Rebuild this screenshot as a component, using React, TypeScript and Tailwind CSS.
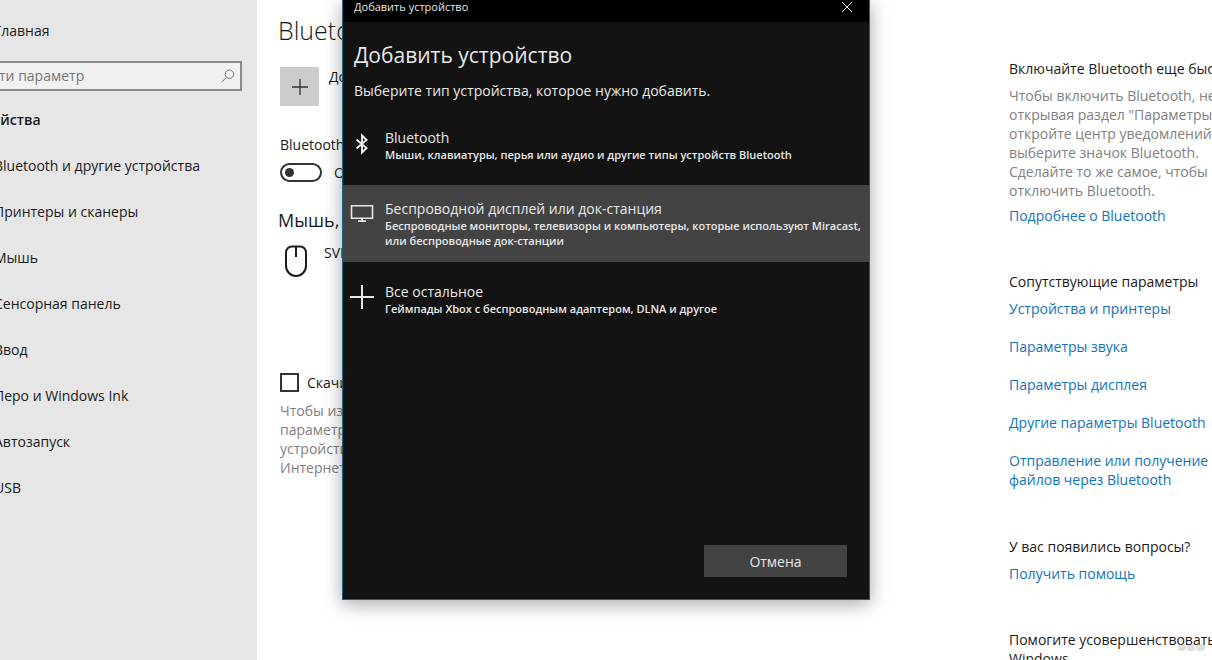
import { useState } from 'react';
import type { ReactNode } from 'react';

const NAV_ITEMS = [
  'Bluetooth и другие устройства',
  'Принтеры и сканеры',
  'Мышь',
  'Сенсорная панель',
  'Ввод',
  'Перо и Windows Ink',
  'Автозапуск',
  'USB',
];

const RELATED_LINKS = ['Устройства и принтеры', 'Параметры звука', 'Параметры дисплея', 'Другие параметры Bluetooth'];

const BluetoothIcon = () => (
  <svg width="14" height="24" viewBox="0 0 14 24" fill="none" stroke="currentColor" strokeWidth="2">
    <path d="M1.500 8.500l10 8.500-4.500 4.500V4.500l4.500 4.500-10 8.500" />
  </svg>
);

const MonitorIcon = () => (
  <svg width="24" height="20" viewBox="0 0 24 20" fill="none" stroke="currentColor">
    <path d="M1.500 1.800h21v12.500h-21z" strokeWidth="1.600" />
    <path d="M12 14.500v2.500M8 17.200h8" strokeWidth="1.800" />
  </svg>
);

const PlusIcon = ({ size }: { size: number }) => (
  <svg width={size} height={size} viewBox="0 0 24 24" fill="none" stroke="currentColor" strokeWidth="2">
    <path d="M12 0v24M0 12h24" />
  </svg>
);

const MouseIcon = () => (
  <svg width="24" height="33" viewBox="0 0 24 33" fill="none" stroke="currentColor" strokeWidth="2">
    <path d="M8 1.5h8a6 6 0 0 1 6 6V21a10 10 0 0 1-20 0V7.500a6 6 0 0 1 6-6zM12 1.500v10.500" />
  </svg>
);

const SearchIcon = () => (
  <svg width="14" height="14" viewBox="0 0 14 14" fill="none" stroke="currentColor">
    <circle cx="8.500" cy="5.200" r="4.200" />
    <path d="M5.500 8.300L.8 13" />
  </svg>
);

const DEVICE_TYPES: { title: string; text: string; icon: ReactNode; style: string }[] = [
  {
    title: 'Bluetooth',
    text: 'Мыши, клавиатуры, перья или аудио и другие типы устройств Bluetooth',
    icon: <BluetoothIcon />,
    style: 'h-[71px] pt-[14px]',
  },
  {
    title: 'Беспроводной дисплей или док-станция',
    text: 'Беспроводные мониторы, телевизоры и компьютеры, которые используют Miracast, или беспроводные док-станции',
    icon: <MonitorIcon />,
    style: 'h-[77px] pt-[14px] bg-[#434343]',
  },
  {
    title: 'Все остальное',
    text: 'Геймпады Xbox с беспроводным адаптером, DLNA и другое',
    icon: <PlusIcon size={24} />,
    style: 'h-[77px] pt-5',
  },
];

const Sidebar = () => (
  <aside className="-ml-[42px] w-[299px] shrink-0 bg-[#e6e6e6] pt-[21px]">
    <a href="#home" className="block pl-9">
      Главная
    </a>
    <div className="relative mt-[21px] mr-[15px] ml-1">
      <input
        type="text"
        aria-label="Найти параметр"
        placeholder="Найти параметр"
        className="block h-[30px] w-full border-2 border-[#8a8a8a] bg-[#f1f1f1] px-2 pb-0.5 placeholder-[#767676] outline-none"
      />
      <span className="absolute top-2 right-[7px] text-[#777]">
        <SearchIcon />
      </span>
    </div>
    <h2 className="mt-[19px] pl-0.5 font-semibold">Устройства</h2>
    <nav className="mt-[13px]">
      {NAV_ITEMS.map((item) => (
        <a key={item} href="#section" className="flex h-[46px] items-center pl-9">
          {item}
        </a>
      ))}
    </nav>
  </aside>
);

const DevicesSettings = () => {
  const [isOn, setIsOn] = useState(false);

  return (
    <main className="min-w-0 flex-1 overflow-hidden pt-3 pl-[23px] whitespace-nowrap">
      <h1 className="-ml-0.5 text-[25px] leading-9 font-light">Bluetooth и другие устройства</h1>
      <button type="button" className="mt-[19px] flex items-start gap-2.5">
        <span className="flex size-[39px] items-center justify-center bg-[#cccccc] text-[#333]">
          <PlusIcon size={16} />
        </span>
        <span>Добавление Bluetooth или другого устройства</span>
      </button>
      <p className="mt-[29px]">Bluetooth</p>
      <div className="mt-[9px] flex items-center gap-3">
        <button
          type="button"
          role="switch"
          aria-checked={isOn}
          aria-label="Bluetooth"
          onClick={() => setIsOn(!isOn)}
          className={`flex h-[19px] w-[42px] items-center rounded-full border-2 border-[#333] px-[3px] ${isOn ? 'justify-end' : ''}`}
        >
          <span className="size-[9px] rounded-full bg-[#333]" />
        </button>
        <span>Откл.</span>
      </div>
      <h2 className="mt-6 -ml-0.5 text-lg leading-7">Мышь, клавиатура и перо</h2>
      <div className="mt-[9px] flex items-start gap-4 pl-1">
        <span className="pt-0.5">
          <MouseIcon />
        </span>
        <span>SVEN Wireless Mouse</span>
      </div>
      <label className="mt-[95px] flex items-center gap-2">
        <input type="checkbox" className="size-[19px] appearance-none border-2 border-[#333] bg-white checked:bg-[#333]" />
        <span>Скачивать через лимитные подключения</span>
      </label>
      <p className="mt-[9px] text-[#808080]">
        Чтобы избежать дополнительных расходов, оставьте этот
        <br />
        параметр отключенным. Программное обеспечение
        <br />
        устройств не будет скачиваться, пока вы подключены к
        <br />
        Интернету с помощью лимитных подключений.
      </p>
    </main>
  );
};

const HelpColumn = () => (
  <aside className="w-[203px] shrink-0 pt-[59px] whitespace-nowrap">
    <h3>Включайте Bluetooth еще быстрее</h3>
    <p className="mt-2 text-[#808080]">
      Чтобы включить Bluetooth, не
      <br />
      открывая раздел "Параметры",
      <br />
      откройте центр уведомлений и
      <br />
      выберите значок Bluetooth.
      <br />
      Сделайте то же самое, чтобы
      <br />
      отключить Bluetooth.
    </p>
    <a href="#more" className="mt-1.5 block text-[#1173bd]">
      Подробнее о Bluetooth
    </a>
    <h3 className="mt-[47px]">Сопутствующие параметры</h3>
    <div className="mt-2 flex flex-col gap-[19px] text-[#1173bd]">
      {RELATED_LINKS.map((link) => (
        <a key={link} href="#related">
          {link}
        </a>
      ))}
      <a href="#files">
        Отправление или получение
        <br />
        файлов через Bluetooth
      </a>
    </div>
    <h3 className="mt-12">У вас появились вопросы?</h3>
    <a href="#help" className="mt-2 block text-[#1173bd]">
      Получить помощь
    </a>
    <h3 className="mt-[47px]">
      Помогите усовершенствовать
      <br />
      Windows
    </h3>
  </aside>
);

const AddDeviceDialog = () => (
  <div
    role="dialog"
    aria-label="Добавить устройство"
    className="w-[528px] border-x border-b border-[#1b6088] bg-[#131313] text-[#e8e8e8] shadow-[0_4px_18px_rgba(0,0,0,0.35)]"
  >
    <div className="flex h-[22px] items-start justify-between bg-black pr-4 pl-[11px] text-[11px] leading-[14px]">
      <span>Добавить устройство</span>
      <button type="button" aria-label="Закрыть" className="pt-px">
        <svg width="12" height="12" viewBox="0 0 12 12" fill="none" stroke="currentColor">
          <path d="M1 1l10 10M11 1L1 11" />
        </svg>
      </button>
    </div>
    <h2 className="mt-[17px] pl-[11px] text-[21px] leading-8">Добавить устройство</h2>
    <p className="mt-2.5 pl-[11px]">Выберите тип устройства, которое нужно добавить.</p>
    <div className="mt-[14px]">
      {DEVICE_TYPES.map(({ title, text, icon, style }) => (
        <button key={title} type="button" className={`flex w-full items-start text-left ${style}`}>
          <span className="flex h-[30px] w-[42px] shrink-0 items-center justify-center pr-1">{icon}</span>
          <span>
            <span className="block">{title}</span>
            <span className="block text-[11px] leading-[15px] font-semibold">{text}</span>
          </span>
        </button>
      ))}
    </div>
    <div className="mt-[206px] mr-[22px] mb-[22px] flex justify-end">
      <button type="button" className="h-8 w-[143px] bg-[#434343]">
        Отмена
      </button>
    </div>
  </div>
);

const App = () => (
  <div className="relative flex h-screen overflow-hidden bg-white font-['Open_Sans','Noto_Sans',sans-serif] text-[14px] leading-[19px] text-[#1a1a1a]">
    <Sidebar />
    <DevicesSettings />
    <HelpColumn />
    <div className="absolute inset-x-0 top-0 flex justify-center">
      <AddDeviceDialog />
    </div>
    <svg className="absolute right-1.5 bottom-2 opacity-30" width="28" height="9" viewBox="0 0 28 9" fill="#999">
      <rect x="0" y="1" width="8" height="7" rx="3" />
      <rect x="9" y="1" width="8" height="7" rx="3" />
      <rect x="18" y="1" width="9" height="7" rx="3" />
    </svg>
  </div>
);

export default App;
